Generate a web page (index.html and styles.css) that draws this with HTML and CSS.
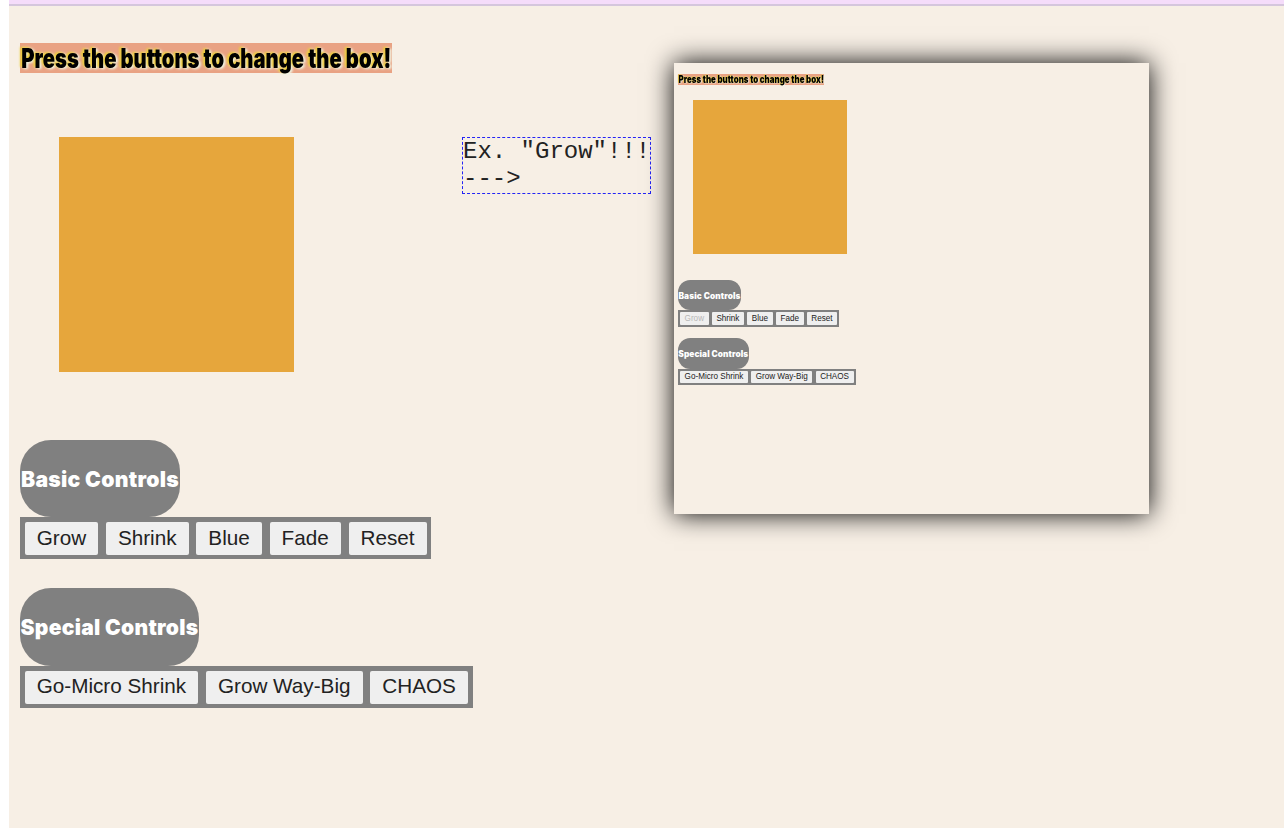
FILE: index.html
```
<!DOCTYPE html>
<html lang="en">
<head>
<meta charset="utf-8">
<title>Change the box</title>
<link rel="stylesheet" href="styles.css">
</head>
<body>
<div class="strip"></div>
<main class="page">
  <section class="demo">
    <svg class="title" viewBox="0 0 371 30"><text x="1" y="24.5" textLength="370" lengthAdjust="spacingAndGlyphs">Press the buttons to change the box!</text></svg>
    <div class="box"></div>
    <svg class="pill basic" viewBox="0 0 160 78"><text x="0.5" y="47.5" textLength="159" lengthAdjust="spacingAndGlyphs">Basic Controls</text></svg>
    <div class="bar"><button>Grow</button><button>Shrink</button><button>Blue</button><button>Fade</button><button>Reset</button></div>
    <svg class="pill special" viewBox="0 0 179 78"><text x="0" y="47.5" textLength="179" lengthAdjust="spacingAndGlyphs">Special Controls</text></svg>
    <div class="bar"><button>Go-Micro Shrink</button><button>Grow Way-Big</button><button>CHAOS</button></div>
  </section>
  <p class="note">Ex. "Grow"!!!<br>---&gt;</p>
  <section class="demo preview">
    <svg class="title" viewBox="0 0 371 30"><text x="1" y="23" textLength="370" lengthAdjust="spacingAndGlyphs">Press the buttons to change the box!</text></svg>
    <div class="box"></div>
    <svg class="pill basic" viewBox="0 0 160 78"><text x="0.5" y="47.5" textLength="159" lengthAdjust="spacingAndGlyphs">Basic Controls</text></svg>
    <div class="bar"><button disabled>Grow</button><button>Shrink</button><button>Blue</button><button>Fade</button><button>Reset</button></div>
    <svg class="pill special" viewBox="0 0 179 78"><text x="0" y="47.5" textLength="179" lengthAdjust="spacingAndGlyphs">Special Controls</text></svg>
    <div class="bar"><button>Go-Micro Shrink</button><button>Grow Way-Big</button><button>CHAOS</button></div>
  </section>
</main>
</body>
</html>
```
FILE: styles.css
```
* { box-sizing: border-box; }
body { margin: 0 0 0 9px; height: 828px; overflow: hidden; background: #fff; }
.strip { height: 6px; background: #f5dcfa; border-bottom: 2px solid #d5c6dc; }
.page { display: flex; align-items: flex-start; height: 822px; padding-left: 11px; background: #f7efe5; }
.demo { display: flex; flex-direction: column; align-items: flex-start; flex: none; width: 442px; padding-top: 37px; }
.title { display: block; width: 371.5px; height: 30px; background: #e9a283; overflow: visible; }
.title text { font: 900 26.5px Inter, sans-serif; fill: #000; filter: drop-shadow(-2px -1px 1px #eccb35) drop-shadow(2px 1px 1px #f0f5e4); }
.box { width: 235px; height: 235px; margin: 64px 0 67.5px 39px; background: #e6a63c; }
.pill { display: block; height: 77.5px; background: #808080; border-radius: 31px; overflow: visible; }
.pill text { font: 900 21.5px Inter, sans-serif; letter-spacing: .3px; fill: #fff; }
.basic { width: 160px; }
.special { width: 179px; margin-top: 29px; }
.bar { display: flex; gap: 7.8px; height: 42.3px; padding: 5px 4.7px 4.3px; background: #808080; }
button { border: 0; border-radius: 2px; margin: 0; padding: 0 12px 2px; background: #efefef; color: #222; font: 20.7px "Liberation Sans", sans-serif; white-space: nowrap; }
.note { width: 189px; height: 57px; margin: 131px 0 0; border: 1px dashed #2424f5; font: 24px/27px "Liberation Mono", monospace; color: #222; white-space: nowrap; }
.preview { width: 475px; height: 451px; margin: 57px 0 0 23px; padding: 10.5px 0 0 4px; background: #f7efe5; box-shadow: 0 0 25px #000; }
.preview .title { width: 146px; height: 11.8px; }
.preview .box { width: 154px; height: 154px; margin: 14.7px 0 26px 15px; }
.preview .pill { height: 30.5px; border-radius: 12.2px; }
.preview .basic { width: 63px; }
.preview .special { width: 70.5px; margin-top: 11.3px; }
.preview .bar { gap: 3.2px; height: 16.5px; padding: 2px 2px 2px; }
.preview button { font-size: 8.15px; padding: 0 4.6px .8px; border-radius: 1px; }
.preview button:disabled { color: #b7b7b7; }
```
